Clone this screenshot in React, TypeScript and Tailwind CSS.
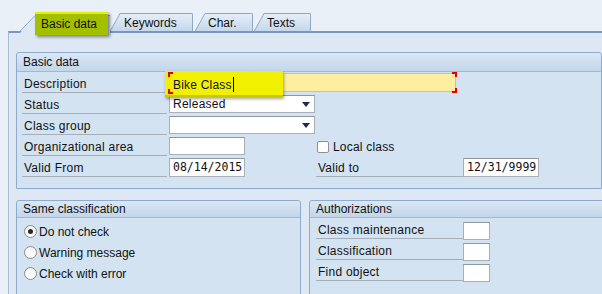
import React from "react";

function Slant({ id, w, h }: { id: string; w: number; h: number }) {
  return (
    <svg width={w} height={h} viewBox={`0 0 ${w} ${h}`} className="block shrink-0">
      <defs>
        <linearGradient id={id} x1="0" y1="0" x2="0" y2="1">
          <stop offset="0" stopColor="#e6eef8" />
          <stop offset="1" stopColor="#c4d8ec" />
        </linearGradient>
      </defs>
      <path d={`M0 ${h} L${w} 0 L${w} ${h} Z`} fill={`url(#${id})`} />
      <path d={`M0.3 ${h} L${w} 0.5`} stroke="#8ea8c8" strokeWidth="1" fill="none" />
    </svg>
  );
}

function Tab({ id, label, bodyClass }: { id: string; label: string; bodyClass: string }) {
  return (
    <div className="flex items-end">
      <Slant id={id} w={10} h={18} />
      <div
        className={`h-[18px] border-t border-r border-[#8ea8c8] rounded-tr-[2px] bg-gradient-to-b from-[#e6eef8] to-[#c4d8ec] pl-[3px] leading-[18px] text-[12px] text-[#111] ${bodyClass}`}
      >
        {label}
      </div>
    </div>
  );
}

function GroupHeader({ title, h }: { title: string; h: string }) {
  return (
    <div className={`${h} border-b border-[#9fb8d4] bg-gradient-to-b from-[#dbe7f4] to-[#c3d6ea] pl-[6px] flex items-center rounded-t-[3px]`}>
      {title}
    </div>
  );
}

function Label({ text, w }: { text: string; w: string }) {
  return (
    <div className={`h-[21px] border-b border-[#a6aeb8] pl-[2px] pt-[2px] leading-[20px] tracking-[0.25px] shrink-0 ${w}`}>{text}</div>
  );
}

function Input({ w, h, children }: { w: string; h: string; children?: React.ReactNode }) {
  return (
    <div
      className={`${w} ${h} shrink-0 bg-white border border-[#a9b0b8] border-t-[#8f979f] pl-[3px] leading-[16px] font-['DejaVu_Sans_Mono',monospace] text-[11.5px] text-[#111]`}
    >
      {children}
    </div>
  );
}

function Dropdown({ text }: { text?: string }) {
  return (
    <div className="w-[146px] h-[18px] shrink-0 bg-white border border-[#a9b0b8] border-t-[#8f979f] pl-[3px] flex items-center justify-between pr-[4px]">
      <span className="leading-[16px] tracking-[0.25px]">{text}</span>
      <svg width="8" height="5" viewBox="0 0 8 5" className="block">
        <path d="M0 0 L8 0 L4 5 Z" fill="#1e2d4f" />
      </svg>
    </div>
  );
}

function Radio({ checked, label }: { checked?: boolean; label: string }) {
  return (
    <div className="h-[21px] flex items-center">
      <div className="w-[13px] h-[13px] rounded-full border border-[#8c8c8c] bg-gradient-to-b from-[#f4f4f4] to-white flex items-center justify-center shrink-0">
        {checked && <div className="w-[5px] h-[5px] rounded-full bg-[#2a2a2a]" />}
      </div>
      <span className="ml-[2px]">{label}</span>
    </div>
  );
}

function Row({ children }: { children: React.ReactNode }) {
  return <div className="h-[21px] flex items-start">{children}</div>;
}

function Bracket({ pos }: { pos: string }) {
  return <div className={`absolute bg-[#e30000] ${pos}`} />;
}

export default function App() {
  return (
    <div className="relative w-[602px] h-[294px] overflow-hidden bg-[#e9f0f7] font-['Liberation_Sans',Arial,sans-serif] text-[12px] text-[#111] leading-none">
      {/* tab strip */}
      <div className="flex h-[31px] items-end pl-[20px]">
        <div className="relative z-10 flex items-end -mb-[2px]">
          <svg width="15" height="18" viewBox="0 0 15 18" className="block shrink-0">
            <path d="M0 18 L15 0 L15 18 Z" fill="#dde8f4" />
            <path d="M0.3 16 L15 0.5" stroke="#8ea8c8" fill="none" />
          </svg>
          <div className="w-[75px] h-[18px] border-t border-[#8ea8c8] bg-[#dde8f4]" />
        </div>
        <Tab id="g1" label="Keywords" bodyClass="w-[73px] pl-[4px]" />
        <div className="w-[2px]" />
        <Tab id="g2" label="Char." bodyClass="w-[48px]" />
        <div className="w-[1px]" />
        <Tab id="g3" label="Texts" bodyClass="w-[47px]" />
      </div>

      {/* content frame */}
      <div className="ml-[8px] w-[600px] h-[263px] border-l border-t-2 border-l-[#a7bbd3] border-t-[#7896bf] bg-[#dde8f4] pl-[7px] pt-[19px]">
        {/* Basic data group */}
        <div className="w-[586px] border border-[#8eaacc] rounded-t-[3px] bg-[#d3e3f2]">
          <GroupHeader title="Basic data" h="h-[19px]" />
          <div className="pl-[5px] pb-[11px]">
            <Row>
              <Label text="Description" w="w-[145px]" />
              <div className="relative ml-[2px] mt-[1px] w-[287px] h-[19px] bg-[#fdeea2] border border-[#c9c3a6]">
                <Bracket pos="-left-[2px] -top-[2px] w-[5px] h-[2px]" />
                <Bracket pos="-left-[2px] -top-[2px] w-[2px] h-[5px]" />
                <Bracket pos="-left-[2px] -bottom-[2px] w-[5px] h-[2px]" />
                <Bracket pos="-left-[2px] -bottom-[2px] w-[2px] h-[5px]" />
                <Bracket pos="-right-[2px] -top-[2px] w-[5px] h-[2px]" />
                <Bracket pos="-right-[2px] -top-[2px] w-[2px] h-[5px]" />
                <Bracket pos="-right-[2px] -bottom-[2px] w-[5px] h-[2px]" />
                <Bracket pos="-right-[2px] -bottom-[2px] w-[2px] h-[5px]" />
              </div>
            </Row>
            <Row>
              <Label text="Status" w="w-[145px]" />
              <div className="ml-[2px] mt-[2px]">
                <Dropdown text="Released" />
              </div>
            </Row>
            <Row>
              <Label text="Class group" w="w-[145px]" />
              <div className="ml-[2px] mt-[2px]">
                <Dropdown />
              </div>
            </Row>
            <Row>
              <Label text="Organizational area" w="w-[145px]" />
              <div className="ml-[2px] mt-[2px]">
                <Input w="w-[76px]" h="h-[18px]" />
              </div>
              <div className="ml-[72px] mt-[6px] flex items-center">
                <div className="w-[12px] h-[12px] rounded-[2px] border border-[#8e8f8f] bg-white shrink-0" />
                <span className="ml-[4px] tracking-[0.2px]">Local class</span>
              </div>
            </Row>
            <Row>
              <Label text="Valid From" w="w-[145px]" />
              <div className="ml-[2px] mt-[2px]">
                <Input w="w-[76px]" h="h-[19px]">
                  <span className="leading-[17px]">08/14/2015</span>
                </Input>
              </div>
              <div className="ml-[71px]">
                <Label text="Valid to" w="w-[147px]" />
              </div>
              <div className="mt-[2px]">
                <Input w="w-[76px]" h="h-[19px]">
                  <span className="leading-[17px]">12/31/9999</span>
                </Input>
              </div>
            </Row>
          </div>
        </div>

        {/* lower groups */}
        <div className="mt-[11px] flex gap-[8px]">
          <div className="w-[285px] h-[120px] shrink-0 border border-[#8eaacc] rounded-t-[3px] bg-[#d3e3f2]">
            <GroupHeader title="Same classification" h="h-[17px]" />
            <div className="pl-[7px] pt-[3px]">
              <Radio checked label="Do not check" />
              <Radio label="Warning message" />
              <Radio label="Check with error" />
            </div>
          </div>
          <div className="w-[300px] h-[120px] shrink-0 border border-[#8eaacc] rounded-t-[3px] bg-[#d3e3f2]">
            <GroupHeader title="Authorizations" h="h-[17px]" />
            <div className="pl-[6px]">
              {["Class maintenance", "Classification", "Find object"].map((t) => (
                <Row key={t}>
                  <Label text={t} w="w-[147px]" />
                  <div className="mt-[4px]">
                    <Input w="w-[27px]" h="h-[18px]" />
                  </div>
                </Row>
              ))}
            </div>
          </div>
        </div>
      </div>

      {/* highlight on active tab */}
      <div className="absolute z-20 left-[35px] top-[12px] w-[73px] h-[23px] bg-[#a2c000] border-t-2 border-[#e4f000] shadow-[2px_2px_3px_rgba(0,0,0,0.45)] pl-[6px] leading-[21px] text-[#111]">
        Basic data
      </div>

      {/* highlight on description field */}
      <div className="absolute z-20 left-[165px] top-[71px] w-[118px] h-[26px] bg-[#f0f000] border-b-2 border-[#c8c800] shadow-[1px_2px_3px_rgba(0,0,0,0.35)]">
        <Bracket pos="left-[3px] top-[1px] w-[5px] h-[2px]" />
        <Bracket pos="left-[3px] top-[1px] w-[2px] h-[5px]" />
        <Bracket pos="left-[3px] bottom-[1px] w-[5px] h-[2px]" />
        <Bracket pos="left-[3px] bottom-[1px] w-[2px] h-[5px]" />
        <div className="absolute left-[8px] top-[6px] flex items-center">
          <span className="leading-[14px] tracking-[0.2px]">Bike Class</span>
          <span className="w-[1px] h-[15px] bg-black ml-[1px]" />
        </div>
      </div>
    </div>
  );
}
